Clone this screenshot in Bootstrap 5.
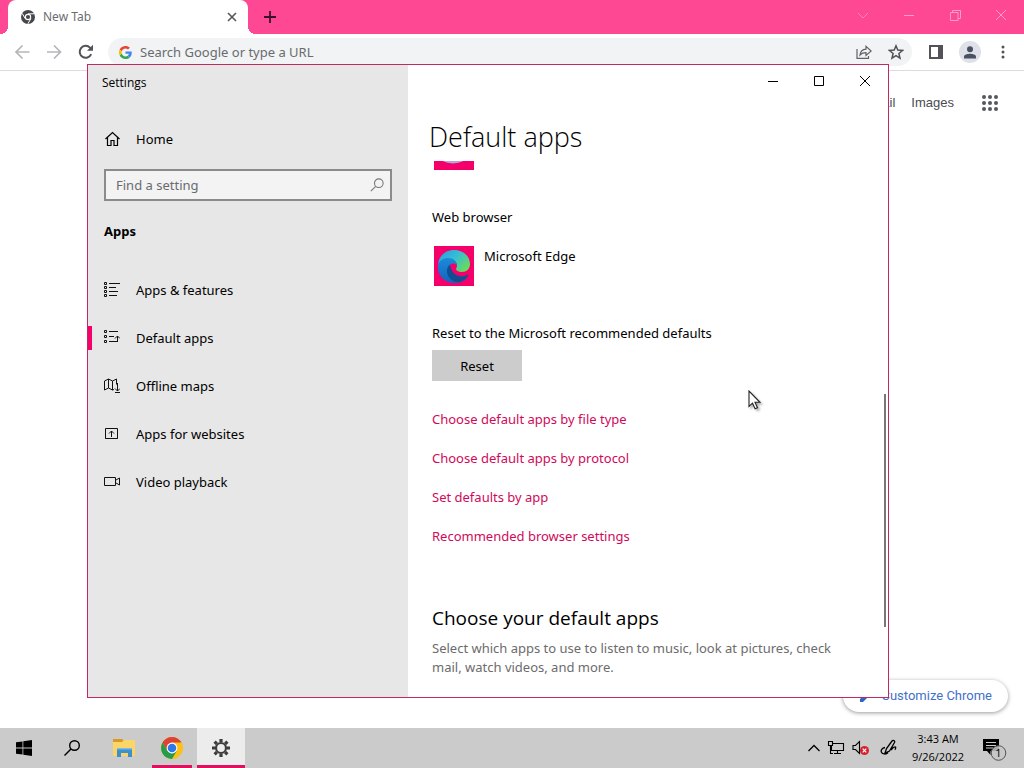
<!DOCTYPE html>
<html lang="en">
<head>
<meta charset="utf-8">
<meta name="viewport" content="width=device-width, initial-scale=1">
<title>Settings - Default apps</title>
<link href="https://cdn.jsdelivr.net/npm/bootstrap@5.3.0/dist/css/bootstrap.min.css" rel="stylesheet">
<style>
  :root { --accent: #f5006a; --ui: "Noto Sans", "Open Sans", sans-serif; }
  body { font-family: var(--ui); font-size: 13px; line-height: 20px; color: #000; background: #fff; overflow: hidden; }
  svg { display: block; flex: none; }
  button { font-family: inherit; }
  .plain { background: none; border: 0; padding: 0; color: inherit; display: flex; align-items: center; justify-content: center; }

  /* browser */
  .tab-strip { background: #ff4894; height: 34px; padding-left: 8px; color: #ff9cc8; }
  .browser-tab { position: relative; width: 240px; background: #fff; border-radius: 8px 8px 0 0; color: #6b6d71; font-size: 12px; padding: 0 10px 0 13px; }
  .browser-tab::before, .browser-tab::after { content: ""; position: absolute; bottom: 0; width: 8px; height: 8px; }
  .browser-tab::before { left: -8px; background: radial-gradient(circle at 0 0, transparent 8px, #fff 8px); }
  .browser-tab::after { right: -8px; background: radial-gradient(circle at 100% 0, transparent 8px, #fff 8px); }
  .new-tab { color: #3c1030; width: 44px; }
  .frame-btn { width: 46px; }
  .toolbar { height: 37px; border-bottom: 1px solid #dcdcde; padding: 0 15px 0 14px; color: #5f6368; }
  .tool-gap { margin-right: 16px; }
  .omnibox { background: #f1f3f4; border-radius: 14px; height: 28px; padding: 0 8px 0 11px; margin: 0 17px 0 14px; }
  .omnibox input { border: 0; background: none; outline: 0; min-width: 0; font-size: 13px; color: #5f6368; padding: 0; }
  .omnibox input::placeholder, .find-box input::placeholder { color: #696b6f; opacity: 1; }
  .avatar { width: 22px; height: 22px; border-radius: 50%; background: #dee1e8; color: #4a5162; }
  .page-links { font: 13px/20px "Liberation Sans", Arial, sans-serif; padding: 22px 26px 0 0; }
  .page-links a { color: #4a4c50; text-decoration: none; }
  .customize { background: #fff; border: 0; border-radius: 16px; height: 32px; padding: 0 16px; margin: 0 16px 16px 0; font: 400 13px/20px Roboto, sans-serif; color: #4470c8; box-shadow: 0 1px 4px rgba(0,0,0,.4); }

  /* settings window */
  .settings { position: absolute; inset: 64px 135px 70px 87px; border: 1px solid #c02a62; background: #fff; z-index: 2; }
  .side { width: 320px; background: #e7e7e7; flex: none; }
  .win-title { font-family: "Open Sans", sans-serif; font-size: 12px; height: 35px; padding-left: 14px; }
  .nav-row { height: 48px; padding-left: 16px; gap: 16px; color: #000; text-decoration: none; }
  .home-row { margin: 15px 0 6px; }
  .find-box { height: 32px; margin: 0 16px; border: 2px solid #8b8b8b; background: #f3f3f3; padding: 0 6px 0 10px; }
  .find-box input { border: 0; background: none; outline: 0; min-width: 0; padding: 0; }
  .side h2 { font-size: 13px; font-weight: 700; line-height: 24px; margin: 18px 16px 23px; }
  .nav-row.active { position: relative; }
  .nav-row.active::before { content: ""; position: absolute; left: 0; top: 12px; width: 4px; height: 24px; background: var(--accent); }
  .caption-btn { width: 46px; height: 32px; }
  .win-main h1 { font-family: "Open Sans", sans-serif; font-size: 27px; line-height: 36px; font-weight: 300; margin: 22px 0 0; padding-left: 21px; color: #000; }
  .scroll-area { padding: 6px 40px 0 24px; overflow: hidden; }
  .tile-cut { height: 9px; margin-left: 2px; overflow: hidden; display: flex; align-items: flex-end; }
  .group-label { font-size: 13px; line-height: 20px; margin: 37px 0 0; }
  .app-pick { gap: 10px; padding: 19px 0 0 2px; align-items: flex-start; }
  .reset-btn { background: #ccc; border: 0; border-radius: 0; width: 90px; height: 31px; font-size: 13px; line-height: 20px; padding: 0; margin-top: 7px; color: #000; }
  .setting-links { gap: 19px; margin-top: 28px; }
  .setting-links a { color: #d0095a; text-decoration: none; }
  .win-main h3 { font-family: "Open Sans", sans-serif; font-size: 19px; line-height: 28px; font-weight: 400; margin: 58px 0 7px; }
  .hint { line-height: 19px; color: #6c6c6c; max-width: 420px; }
  .thumb { position: absolute; right: 2px; top: 52%; height: 37%; width: 2px; background: #777; }
  .pointer { position: absolute; left: 748px; top: 390px; z-index: 3; filter: drop-shadow(2px 2px 1px rgba(0,0,0,.3)); }

  /* taskbar */
  .taskbar { height: 40px; background: #cbcbcb; }
  .task-btn { width: 48px; height: 40px; border-bottom: 3px solid transparent; padding-top: 3px; }
  .task-btn.running { width: 40px; border-color: #e0105f; margin: 0 5px 0 4px; }
  .task-btn.focused { background: #ececec; border-color: #e0105f; }
  .tray { gap: 6px; }
  .clock { font-family: "Open Sans", sans-serif; font-size: 11px; line-height: 18px; width: 60px; white-space: nowrap; }
</style>
</head>
<body class="d-flex flex-column vh-100">

<header>
  <div class="tab-strip d-flex">
    <div class="browser-tab d-flex align-items-center">
      <svg width="14" height="14" viewBox="0 0 14 14"><circle cx="7" cy="7" r="7" fill="#45474b"/><circle cx="7" cy="7" r="3.200" fill="#fff"/><circle cx="7" cy="7" r="2.100" fill="#45474b"/><path d="M7 3.800h6.200M4.200 8.600L1.200 3.400M9.800 8.600L6.900 13.800" stroke="#fff" stroke-width="1"/></svg>
      <span class="ms-2 flex-grow-1">New Tab</span>
      <button class="plain" aria-label="Close tab"><svg width="12" height="12" viewBox="0 0 12 12"><path d="M2 2l8 8M10 2l-8 8" stroke="#54575b" stroke-width="1.600"/></svg></button>
    </div>
    <button class="plain new-tab" aria-label="New tab"><svg width="12" height="12" viewBox="0 0 12 12"><path d="M6 0v12M0 6h12" stroke="currentColor" stroke-width="1.800"/></svg></button>
    <div class="d-flex ms-auto align-items-center pb-1">
      <button class="plain frame-btn" aria-label="Search tabs"><svg width="12" height="12" viewBox="0 0 12 12" fill="none" stroke="currentColor" opacity=".7"><path d="M1 4l5 5 5-5"/></svg></button>
      <button class="plain frame-btn" aria-label="Minimize browser"><svg width="10" height="12" viewBox="0 0 10 12" stroke="currentColor"><path d="M0 6.500h10"/></svg></button>
      <button class="plain frame-btn" aria-label="Restore browser"><svg width="11" height="11" viewBox="0 0 11 11" fill="none" stroke="currentColor"><path d="M.5 2.500h7.500v8H.5zM2.500 2.500v-2h8v8H8"/></svg></button>
      <button class="plain frame-btn" aria-label="Close browser"><svg width="10" height="10" viewBox="0 0 10 10" stroke="currentColor"><path d="M0 0l10 10M10 0L0 10"/></svg></button>
    </div>
  </div>
  <div class="toolbar d-flex align-items-center">
    <button class="plain tool-gap" aria-label="Back"><svg width="16" height="16" viewBox="0 0 16 16" fill="none" stroke="#b4b6b9" stroke-width="1.700"><path d="M15.500 8H2.500M8.500 1.500L2 8l6.500 6.500"/></svg></button>
    <button class="plain tool-gap" aria-label="Forward"><svg width="16" height="16" viewBox="0 0 16 16" fill="none" stroke="#b4b6b9" stroke-width="1.700"><path d="M1 8h13M8 1.500L14.500 8 8 14.500"/></svg></button>
    <button class="plain" aria-label="Reload"><svg width="16" height="16" viewBox="0 0 16 16"><path d="M13.200 10.200A6 6 0 1 1 12 3.600L14 5.500" fill="none" stroke="#505357" stroke-width="2"/><path d="M15 .8v6H9z" fill="#505357"/></svg></button>
    <div class="omnibox d-flex align-items-center flex-grow-1">
      <svg width="13" height="13" viewBox="0 0 48 48"><path fill="#EA4335" d="M24 9.500c3.500 0 6.700 1.200 9.200 3.600l6.900-6.900C35.900 2.400 30.500 0 24 0 14.600 0 6.500 5.400 2.600 13.200l8 6.200C12.400 13.700 17.700 9.500 24 9.500z"/><path fill="#4285F4" d="M47 24.600c0-1.600-.2-3.100-.4-4.600H24v9h12.900c-.6 3-2.300 5.500-4.700 7.200l7.700 6C44.400 38 47 32 47 24.600z"/><path fill="#FBBC05" d="M10.500 28.600a14 14 0 0 1 0-9.200l-8-6.200a24 24 0 0 0 0 21.600z"/><path fill="#34A853" d="M24 48c6.500 0 11.900-2.100 15.900-5.800l-7.700-6c-2.200 1.500-4.900 2.300-8.200 2.300-6.300 0-11.600-4.200-13.500-9.900l-8 6.200C6.500 42.600 14.600 48 24 48z"/></svg>
      <input class="ms-2 flex-grow-1" type="text" placeholder="Search Google or type a URL" aria-label="Search Google or type a URL">
      <button class="plain tool-gap" aria-label="Share"><svg width="16" height="16" viewBox="0 0 16 16" fill="none" stroke="#606367" stroke-width="1.200"><path d="M1 5v9.400h11.500V12"/><path d="M4 11c.4-3.600 2.400-5.600 6-5.800V2.400L15.200 7 10 11.500V8.700C7.500 8.700 5.500 9.400 4 11z"/></svg></button>
      <button class="plain" aria-label="Bookmark"><svg width="16" height="16" viewBox="0 0 16 16" fill="none" stroke="#505357" stroke-width="1.500"><path d="M8 1.800l1.800 4.300 4.700.4-3.600 3 1.100 4.600L8 11.700l-4 2.400 1.100-4.600-3.600-3 4.700-.4z"/></svg></button>
    </div>
    <button class="plain me-3" aria-label="Side panel"><svg width="14" height="14" viewBox="0 0 14 14"><path d="M1 1h12v12H1z" fill="none" stroke="#505357" stroke-width="2"/><path d="M9 1h4v12H9z" fill="#505357"/></svg></button>
    <button class="plain avatar me-3" aria-label="Profile"><svg width="12" height="13" viewBox="0 0 12 13" fill="currentColor"><circle cx="6" cy="3.200" r="3"/><path d="M0 12.500V10.500C0 8.500 4 7.700 6 7.700s6 .8 6 2.800v2z"/></svg></button>
    <button class="plain px-1" aria-label="Menu"><svg width="4" height="14" viewBox="0 0 4 14" fill="#505357"><circle cx="2" cy="2" r="1.500"/><circle cx="2" cy="7" r="1.500"/><circle cx="2" cy="12" r="1.500"/></svg></button>
  </div>
</header>

<main class="flex-grow-1 d-flex flex-column justify-content-between align-items-end">
  <nav class="page-links d-flex align-items-center">
    <a href="#" class="me-3">Gmail</a>
    <a href="#">Images</a>
    <button class="plain ms-4 ps-1" aria-label="Google apps"><svg width="16" height="16" viewBox="0 0 16 16" fill="#55585c"><circle cx="2" cy="2" r="2"/><circle cx="8" cy="2" r="2"/><circle cx="14" cy="2" r="2"/><circle cx="2" cy="8" r="2"/><circle cx="8" cy="8" r="2"/><circle cx="14" cy="8" r="2"/><circle cx="2" cy="14" r="2"/><circle cx="8" cy="14" r="2"/><circle cx="14" cy="14" r="2"/></svg></button>
  </nav>
  <button class="customize d-flex align-items-center"><svg class="me-2" width="14" height="14" viewBox="0 0 14 14" fill="#2f66c4"><path d="M1 13v-3l7.500-7.500 3 3L4 13zM9.500 1.500l1-1 3 3-1 1z"/></svg>Customize Chrome</button>
</main>

<section class="settings d-flex" aria-label="Settings window">
  <aside class="side">
    <div class="win-title d-flex align-items-center">Settings</div>
    <a href="#" class="nav-row home-row d-flex align-items-center">
      <svg width="16" height="16" viewBox="0 0 16 16" fill="none" stroke="#000" stroke-width="1.200"><path d="M1.500 8l7-6.500 7 6.500M3.500 6.500v8H7V9.500h3v5h3.500v-8"/></svg>Home</a>
    <div class="find-box d-flex align-items-center">
      <input class="flex-grow-1" type="text" placeholder="Find a setting" aria-label="Find a setting">
      <svg width="14" height="14" viewBox="0 0 14 14" fill="none" stroke="#777" stroke-width="1.100"><circle cx="8.800" cy="5.200" r="4.300"/><path d="M5.700 8.300L.8 13.200"/></svg>
    </div>
    <h2>Apps</h2>
    <nav>
      <a href="#" class="nav-row d-flex align-items-center"><svg width="16" height="16" viewBox="0 0 16 16" fill="none" stroke="#111"><path d="M.5.5h2v2h-2zM.5 4.500h2v2h-2zM.5 8.500h2v2h-2zM.5 12.500h2v2h-2zM5 1.500h11M5 5.500h7M5 9.500h9M5 13.500h8"/></svg>Apps &amp; features</a>
      <a href="#" class="nav-row active d-flex align-items-center" aria-current="page"><svg width="16" height="16" viewBox="0 0 16 16" fill="none" stroke="#111"><path d="M.5.5h2v2h-2zM.5 5.500h2v2h-2zM.5 10.500h2v2h-2zM5 1.500h9M5 6.500h5M5 11.500h8M13.500 12V6M11 8.500L13.500 6 16 8.500"/></svg>Default apps</a>
      <a href="#" class="nav-row d-flex align-items-center"><svg width="16" height="16" viewBox="0 0 16 16" fill="none" stroke="#111"><path d="M10 11.500l-1.500.5-4-2-4 2V3l4-2 4 2 4-2v5.500M4.500 1v9M8.500 3v9M13.500 5v8M11 10.500l2.500 2.500L16 10.500M11 14.500h5"/></svg>Offline maps</a>
      <a href="#" class="nav-row d-flex align-items-center"><svg width="16" height="16" viewBox="0 0 16 16" fill="none" stroke="#111"><path d="M5.500 12.500h-4v-10h12v10h-4M7.500 11V5M5 7.500L7.500 5 10 7.500M1.500 12.500h12"/></svg>Apps for websites</a>
      <a href="#" class="nav-row d-flex align-items-center"><svg width="16" height="16" viewBox="0 0 16 16" fill="none" stroke="#111"><path d="M.5 3.500h11v8H.5zM12 6l3.500-2v7L12 9"/></svg>Video playback</a>
    </nav>
  </aside>
  <div class="win-main flex-grow-1 d-flex flex-column">
    <div class="d-flex justify-content-end">
      <button class="plain caption-btn" aria-label="Minimize"><svg width="10" height="10" viewBox="0 0 10 10" stroke="#000"><path d="M0 5.500h10"/></svg></button>
      <button class="plain caption-btn" aria-label="Maximize"><svg width="10" height="10" viewBox="0 0 10 10" fill="none" stroke="#000"><path d="M.5.5h9v9h-9z"/></svg></button>
      <button class="plain caption-btn" aria-label="Close"><svg width="10" height="10" viewBox="0 0 10 10" stroke="#000"><path d="M0 0l10 10M10 0L0 10"/></svg></button>
    </div>
    <h1>Default apps</h1>
    <div class="scroll-area">
      <div class="tile-cut"><svg width="40" height="40" viewBox="0 0 40 40"><path fill="#f5006a" d="M0 0h40v40H0z"/><ellipse cx="19" cy="23" rx="16" ry="10.500" fill="#b6a6d8"/></svg></div>
      <p class="group-label">Web browser</p>
      <button class="plain app-pick">
        <svg width="40" height="40" viewBox="0 0 40 40">
          <defs>
            <linearGradient id="edgeTop" x1="0" y1="0" x2="1" y2=".7"><stop offset="0" stop-color="#2a9ade"/><stop offset=".5" stop-color="#35bdd6"/><stop offset="1" stop-color="#68dc5c"/></linearGradient>
            <linearGradient id="edgeLow" x1="0" y1="0" x2="0" y2="1"><stop offset="0" stop-color="#1c8ad8"/><stop offset="1" stop-color="#1464bd"/></linearGradient>
          </defs>
          <path fill="#f5006a" d="M0 0h40v40H0z"/>
          <path fill="url(#edgeTop)" d="M4 19C4.500 10 11 4 20 4c9.500 0 16 6.500 16 14 0 5-3.500 8-8 8-4 0-6-1.500-6-3 0-1 1-1.500 1-3.500 0-3-3-6.500-8.500-6.500C9 13 5 16 4 19z"/>
          <path fill="url(#edgeLow)" d="M4 19c1.500-4.500 5.500-7 10-7 5.500 0 9 3.500 9 7.500-1-1.500-2.500-2-4-2-3 0-4.500 3-3.500 7 1 5.500 6 8.500 11 8.500 3 0 5-1 7-2-3 4-8 6-13 6C11 37 3 30 4 19z"/>
          <path fill="#124d92" d="M16 18.500c-3.500 3-4 8-1.500 12 2.500 4.500 7.500 6.500 11.500 5.500 4-1 7-4 8.500-7-.3-.5-1-.3-1.500 0-3 1.500-8 2-11.500-.5-3-2-5-6-5.500-10z"/>
        </svg>
        <span>Microsoft Edge</span>
      </button>
      <p class="group-label">Reset to the Microsoft recommended defaults</p>
      <button class="reset-btn btn">Reset</button>
      <div class="setting-links d-flex flex-column align-items-start">
        <a href="#">Choose default apps by file type</a>
        <a href="#">Choose default apps by protocol</a>
        <a href="#">Set defaults by app</a>
        <a href="#">Recommended browser settings</a>
      </div>
      <h3>Choose your default apps</h3>
      <p class="hint mb-0">Select which apps to use to listen to music, look at pictures, check mail, watch videos, and more.</p>
    </div>
  </div>
  <div class="thumb"></div>
</section>

<svg class="pointer" width="13" height="20" viewBox="0 0 13 20"><path d="M1 1v15.500l3.500-3.300 2.600 5.600 2.400-1.100-2.500-5.400H12z" fill="#fff" stroke="#222" stroke-width="1.100"/></svg>

<footer class="taskbar d-flex align-items-center">
  <button class="plain task-btn" aria-label="Start"><svg width="16" height="16" viewBox="0 0 16 16"><path d="M0 2.300L6.500 1.400v6.200H0zM7.300 1.300L16 0v7.600H7.300zM0 8.400h6.500v6.200L0 13.700zM7.300 8.400H16V16l-8.700-1.300z"/></svg></button>
  <button class="plain task-btn" aria-label="Search"><svg width="16" height="16" viewBox="0 0 16 16" fill="none" stroke="#000" stroke-width="1.400"><circle cx="10.500" cy="5.500" r="4.800"/><path d="M7 9L.5 15.500"/></svg></button>
  <button class="plain task-btn ms-1" aria-label="File Explorer"><svg width="22" height="20" viewBox="0 0 22 20"><path fill="#d99a22" d="M0 1h9l2 2v4H0z"/><path fill="#fbd568" d="M0 4h9l2-2h11v16H0z"/><path fill="#3d8fce" d="M4 11h15v8h-4v-4H8v4H4z"/><path fill="#79bce8" d="M4 10h15v1.500H4z"/></svg></button>
  <button class="plain task-btn running" aria-label="Google Chrome"><svg width="22" height="22" viewBox="0 0 22 22"><circle cx="11" cy="11" r="11" fill="#fbc116"/><path fill="#de4234" d="M1.500 5.500A11 11 0 0 1 20.500 5.500H11L6.200 13.700z"/><path fill="#259b4c" d="M1.500 5.500L6.200 13.700 11 16.500l4.800-2.700L11 22A11 11 0 0 1 1.500 5.500z"/><circle cx="11" cy="11" r="5.400" fill="#fff"/><circle cx="11" cy="11" r="4.300" fill="#2f78e8"/></svg></button>
  <button class="plain task-btn focused" aria-label="Settings"><svg width="18" height="18" viewBox="0 0 18 18" fill="none" stroke="#3c3c3c"><circle cx="9" cy="9" r="5" stroke-width="2.200"/><path stroke-width="3.200" d="M9 0v3M9 15v3M0 9h3M15 9h3M2.600 2.600l2.200 2.200M13.200 13.200l2.200 2.200M2.600 15.400l2.200-2.200M13.200 4.800l2.200-2.200"/></svg></button>
  <div class="tray d-flex align-items-center ms-auto">
    <button class="plain" aria-label="Show hidden icons"><svg width="12" height="8" viewBox="0 0 12 8" fill="none" stroke="#000" stroke-width="1.300"><path d="M.5 7L6 1.500 11.500 7"/></svg></button>
    <button class="plain" aria-label="Network"><svg width="20" height="16" viewBox="0 0 20 16" fill="none" stroke="#000" stroke-width="1.100"><path d="M7 3.500h10.500v7H5.500V6M11.500 10.500v3M8 13.500h7M2.500 1.500h4v4h-4zM4.500 5.500v8H7"/></svg></button>
    <button class="plain" aria-label="Volume muted"><svg width="18" height="16" viewBox="0 0 18 16"><path d="M1 5.500h2.500L7.500 1.500v12l-4-4H1z" fill="none" stroke="#000" stroke-width="1.100"/><circle cx="12.500" cy="10.500" r="4.500" fill="#d6202c"/><path d="M10.700 8.700l3.600 3.600M14.300 8.700l-3.600 3.600" stroke="#fff" stroke-width="1.200"/></svg></button>
    <button class="plain ms-1" aria-label="Windows Ink"><svg width="18" height="18" viewBox="0 0 18 18" fill="none" stroke="#000" stroke-width="1.300"><path d="M5 14l1.500-4.500L12 2c1-1.400 3.300-.2 2.500 1.500L9.500 12zM5 8.500c-3 .5-4.500 3-3.500 4.800 1 1.700 4.500 2.700 6.500.2M11 11c1.500-2 3-3.500 4.500-3 .8.800-.8 2 0 2.800"/></svg></button>
    <div class="clock text-center ms-1"><div>3:43 AM</div><div>9/26/2022</div></div>
    <button class="plain ms-2 me-3" aria-label="1 new notification"><svg width="26" height="26" viewBox="0 0 26 26"><path d="M1 4h16v12H8.500v4L5 16H1z"/><path d="M4 7.500h10M4 10.500h10M4 13h7" stroke="#ccc"/><circle cx="16.500" cy="18" r="7.300" fill="#c8c8c8" fill-opacity=".85" stroke="#555"/><text x="16.500" y="22" font-size="11" text-anchor="middle" font-family="Open Sans, sans-serif">1</text></svg></button>
  </div>
</footer>

<script src="https://cdn.jsdelivr.net/npm/bootstrap@5.3.0/dist/js/bootstrap.bundle.min.js"></script>
</body>
</html>
